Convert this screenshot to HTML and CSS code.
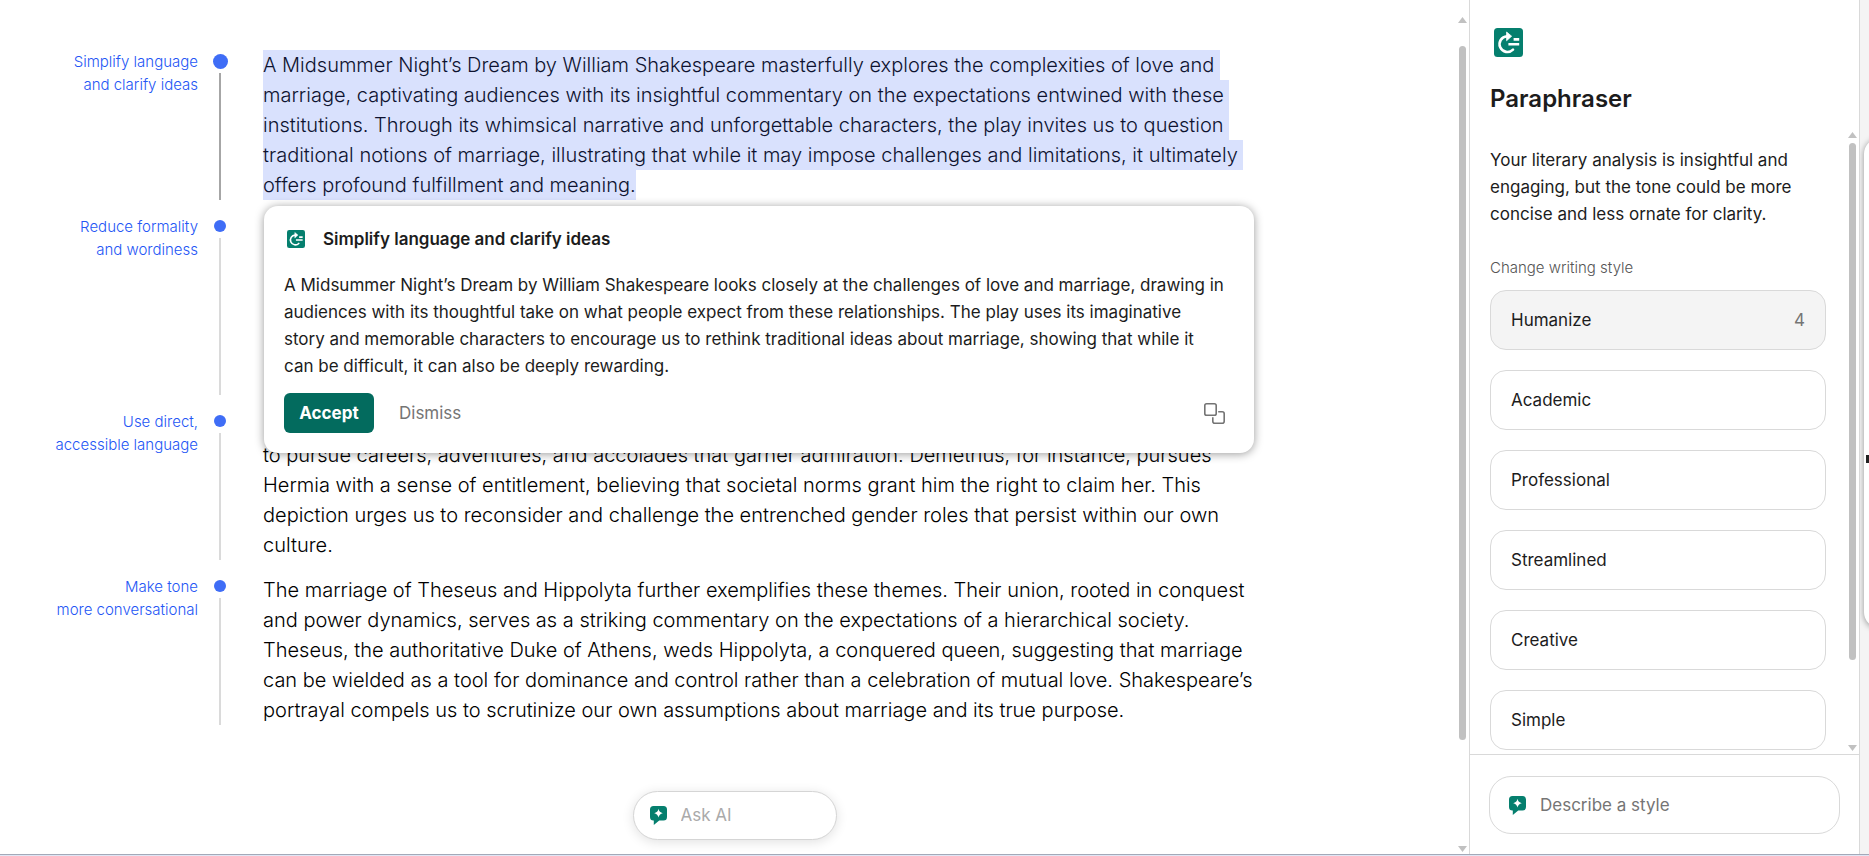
FILE: index.html
```
<!DOCTYPE html>
<html lang="en">
<head>
    <meta charset="UTF-8">
    <meta name="viewport" content="width=device-width, initial-scale=1.0">
    <title>Paraphraser</title>
    <link rel="stylesheet" href="styles.css">
</head>
<body>
    <!-- Shared icons -->
    <svg class="sprite" aria-hidden="true">
        <symbol id="icon-paraphrase" viewBox="0 0 29 29">
            <rect width="29" height="29" rx="3.5" fill="#057f6e"/>
            <g fill="none" stroke="#fff" stroke-width="2.6" stroke-linecap="round" stroke-linejoin="round">
                <path d="M14.500 8.200H13a7.900 7.900 0 1 0 6 13.500"/>
                <path d="M19.600 11.400h5.600M14.400 16.200h10.800" stroke-linecap="butt"/>
            </g>
            <path d="M12.600 4l5 4.200-5 4.500z" fill="#fff" stroke="#fff" stroke-width=".8" stroke-linejoin="round"/>
        </symbol>
        <symbol id="icon-spark" viewBox="0 0 17 19">
            <path d="M3.500 0h10A3.500 3.500 0 0 1 17 3.500v7.500a3.500 3.500 0 0 1-3.500 3.500H9.200L3.800 19v-4.500h-.3A3.500 3.500 0 0 1 0 11V3.500A3.500 3.500 0 0 1 3.500 0z" fill="#057f6e"/>
            <path d="M8.500 2.800q.7 3.600 4.300 4.400-3.600.8-4.300 4.400-.7-3.600-4.300-4.400 3.600-.8 4.300-4.400z" fill="#fff"/>
        </symbol>
    </svg>

    <div class="app">
        <main class="editor">
            <div class="document">
                <section class="row active">
                    <a class="label" href="#">Simplify language<br>and clarify ideas</a>
                    <div class="rail"></div>
                    <div class="text">
                        <p><mark>A Midsummer Night’s Dream by William Shakespeare masterfully explores the complexities of love and marriage, captivating audiences with its insightful commentary on the expectations entwined with these institutions. Through its whimsical narrative and unforgettable characters, the play invites us to question traditional notions of marriage, illustrating that while it may impose challenges and limitations, it ultimately offers profound fulfillment and meaning.</mark></p>

                        <div class="popover">
                            <h2><svg><use href="#icon-paraphrase"/></svg>Simplify language and clarify ideas</h2>
                            <p>
                                A Midsummer Night’s Dream by William Shakespeare looks closely at the challenges of love and marriage, drawing in<br>
                                audiences with its thoughtful take on what people expect from these relationships. The play uses its imaginative<br>
                                story and memorable characters to encourage us to rethink traditional ideas about marriage, showing that while it<br>
                                can be difficult, it can also be deeply rewarding.
                            </p>
                            <div class="actions">
                                <button class="accept">Accept</button>
                                <button class="dismiss">Dismiss</button>
                                <button class="compare" aria-label="Compare">
                                    <svg width="21" height="21" viewBox="0 0 21 21" fill="none" stroke="#747474" stroke-width="1.6">
                                        <rect x=".8" y=".8" width="11.400" height="11.400" rx="1.800"/>
                                        <path d="M14.200 8.800h4a2 2 0 0 1 2 2v7.400a2 2 0 0 1-2 2h-7.400a2 2 0 0 1-2-2v-4"/>
                                    </svg>
                                </button>
                            </div>
                        </div>
                    </div>
                </section>

                <section class="row tall">
                    <a class="label" href="#">Reduce formality<br>and wordiness</a>
                    <div class="rail"></div>
                    <div class="text"></div>
                </section>

                <section class="row">
                    <a class="label" href="#">Use direct,<br>accessible language</a>
                    <div class="rail"></div>
                    <div class="text">
                        <p>to pursue careers, adventures, and accolades that garner admiration. Demetrius, for instance, pursues Hermia with a sense of entitlement, believing that societal norms grant him the right to claim her. This depiction urges us to reconsider and challenge the entrenched gender roles that persist within our own culture.</p>
                    </div>
                </section>

                <section class="row">
                    <a class="label" href="#">Make tone<br>more conversational</a>
                    <div class="rail"></div>
                    <div class="text">
                        <p>The marriage of Theseus and Hippolyta further exemplifies these themes. Their union, rooted in conquest and power dynamics, serves as a striking commentary on the expectations of a hierarchical society. Theseus, the authoritative Duke of Athens, weds Hippolyta, a conquered queen, suggesting that marriage can be wielded as a tool for dominance and control rather than a celebration of mutual love. Shakespeare’s portrayal compels us to scrutinize our own assumptions about marriage and its true purpose.</p>
                    </div>
                </section>
            </div>

            <div class="scrollbar">
                <span class="up"></span>
                <span class="track"><span class="thumb"></span></span>
                <span class="down"></span>
            </div>

            <label class="ask">
                <svg width="17" height="19"><use href="#icon-spark"/></svg>
                <input type="text" placeholder="Ask AI" aria-label="Ask AI">
            </label>
        </main>

        <aside class="sidebar">
            <header>
                <svg width="29" height="29"><use href="#icon-paraphrase"/></svg>
                <h1>Paraphraser</h1>
            </header>
            <div class="panel">
                <div class="panel-content">
                    <p>Your literary analysis is insightful and engaging, but the tone could be more concise and less ornate for clarity.</p>
                    <h3>Change writing style</h3>
                    <div class="styles">
                        <button class="selected">Humanize <span>4</span></button>
                        <button>Academic</button>
                        <button>Professional</button>
                        <button>Streamlined</button>
                        <button>Creative</button>
                        <button>Simple</button>
                    </div>
                </div>
                <div class="scrollbar">
                    <span class="up"></span>
                    <span class="track"><span class="thumb"></span></span>
                    <span class="down"></span>
                </div>
            </div>
            <footer>
                <label class="describe">
                    <svg width="17" height="19"><use href="#icon-spark"/></svg>
                    <input type="text" placeholder="Describe a style" aria-label="Describe a style">
                </label>
            </footer>
        </aside>

        <div class="edge">
            <div class="drawer"></div>
        </div>
    </div>
</body>
</html>
```
FILE: styles.css
```
* {
    box-sizing: border-box;
}

body {
    margin: 0;
    font-family: Inter, "Liberation Sans", sans-serif;
    font-size: 17px;
    line-height: 27px;
    color: #1c1c1c;
    background-color: #fff;
}

h1, h2, h3, p {
    margin: 0;
}

button, input {
    font: inherit;
    color: inherit;
    padding: 0;
    border: 0;
    background: none;
}

button {
    cursor: pointer;
}

svg {
    flex: none;
}

.sprite {
    position: absolute;
    width: 0;
    height: 0;
}

.app {
    display: grid;
    grid-template-columns: 1fr 391px 9px;
    height: 100vh;
    border-bottom: 1px solid #dfe6f5;
    box-shadow: inset 0 -1px #a3a9b8;
    padding-bottom: 1px;
    overflow: hidden;
}

/* Document with the suggestion timeline */
.editor {
    position: relative;
    display: flex;
    min-height: 0;
}

.document {
    flex: 1;
    display: flex;
    flex-direction: column;
    gap: 15px;
    padding: 50px 200px 0 20px;
}

.row {
    display: grid;
    grid-template-columns: 178px 44px 1fr;
    min-height: 150px;
}

.row.tall {
    min-height: 180px;
}

.label {
    font-size: 15px;
    font-weight: 300;
    line-height: 23px;
    text-align: right;
    text-decoration: none;
    color: #2456f5;
}

.rail {
    display: flex;
    flex-direction: column;
    align-items: center;
    gap: 6px;
    padding-top: 5px;
}

.rail::before {
    content: "";
    width: 12px;
    height: 12px;
    border-radius: 50%;
    background-color: #3f6df6;
}

.rail::after {
    content: "";
    flex: 1;
    width: 2px;
    background-color: #dadada;
}

.active .rail {
    gap: 4px;
    padding-top: 4px;
}

.active .rail::before {
    width: 15px;
    height: 15px;
}

.active .rail::after {
    background-color: #a6a6a6;
}

.text {
    position: relative;
    align-self: end;
    margin-left: 21px;
    font-size: 20px;
    font-weight: 300;
    line-height: 30px;
    color: #000;
}

mark {
    padding: 3px 0;
    color: #0e1330;
    background-color: #d9e1fd;
    white-space: break-spaces;
}

/* Suggestion card */
.popover {
    position: absolute;
    z-index: 1;
    top: calc(100% + 6px);
    left: 1px;
    right: 2px;
    padding: 20px;
    border-radius: 14px;
    background-color: #fff;
    box-shadow: 0 1px 10px rgba(0, 0, 0, 0.4);
    font-size: 17px;
    font-weight: 400;
    line-height: 27px;
    color: #1c1c1c;
}

.popover h2 {
    display: flex;
    align-items: center;
    gap: 18px;
    height: 26px;
    padding-left: 3px;
    margin-bottom: 20px;
    font-size: 17px;
    font-weight: 600;
}

.popover h2 svg {
    width: 18px;
    height: 18px;
}

.actions {
    display: flex;
    align-items: center;
    gap: 25px;
    margin-top: 13px;
}

.accept {
    width: 90px;
    height: 40px;
    border-radius: 6px;
    font-weight: 700;
    color: #fff;
    background-color: #036b5e;
}

.dismiss {
    color: #757575;
}

.compare {
    display: flex;
    margin-left: auto;
    margin-right: 9px;
}

.ask {
    position: absolute;
    bottom: 14px;
    left: 50%;
    transform: translateX(-50%);
    display: flex;
    align-items: center;
    gap: 14px;
    width: 204px;
    height: 49px;
    padding: 0 16px;
    border: 1px solid #d5d5d5;
    border-radius: 25px;
    background-color: #fff;
    box-shadow: 0 2px 12px rgba(0, 0, 0, 0.12);
}

input {
    flex: 1;
    min-width: 0;
    outline: none;
}

.ask input::placeholder {
    color: #aaa;
}

/* Scrollbars */
.scrollbar {
    display: flex;
    flex-direction: column;
    align-items: center;
    width: 13px;
}

.editor > .scrollbar {
    padding: 17px 0 2px;
}

.track {
    flex: 1;
    width: 7px;
    padding: 5px 0 85px;
}

.editor > .scrollbar .track {
    padding: 23px 0 106px;
}

.thumb {
    display: block;
    height: 100%;
    border-radius: 4px;
    background-color: #c1c1c1;
}

.up, .down {
    width: 9px;
    height: 6px;
    background-color: #c1c1c1;
    clip-path: polygon(50% 0, 100% 100%, 0 100%);
}

.down {
    clip-path: polygon(0 0, 100% 0, 50% 100%);
}

/* Sidebar */
.sidebar {
    display: flex;
    flex-direction: column;
    min-height: 0;
    border: solid #d9d9d9;
    border-width: 0 1px;
}

.sidebar header {
    padding: 28px 24px 0;
    height: 131px;
}

.sidebar header svg {
    display: block;
}

h1 {
    margin: 27px 0 0 -4px;
    font-size: 24px;
    line-height: 30px;
    font-weight: 600;
}

.panel {
    flex: 1;
    display: flex;
    min-height: 0;
    overflow: hidden;
}

.panel-content {
    flex: 1;
    padding: 16px 20px 0 20px;
}

.panel > .scrollbar {
    padding: 1px 0 3px;
}

h3 {
    margin: 28px 0 10px;
    font-size: 15px;
    line-height: 24px;
    font-weight: 300;
    color: #555;
}

.styles {
    display: flex;
    flex-direction: column;
    gap: 20px;
}

.styles button {
    display: flex;
    justify-content: space-between;
    align-items: center;
    height: 60px;
    padding: 0 20px;
    border: 1px solid #d9d9d9;
    border-radius: 16px;
}

.styles .selected {
    background-color: #f4f4f4;
}

.styles span {
    color: #757575;
}

.sidebar footer {
    padding: 21px 19px 20px;
    border-top: 1px solid #d9d9d9;
}

.describe {
    display: flex;
    align-items: center;
    gap: 14px;
    height: 58px;
    padding: 0 19px;
    border: 1px solid #d9d9d9;
    border-radius: 22px;
}

.describe input::placeholder {
    color: #757575;
}

/* Collapsed drawer at the window edge */
.edge {
    display: flex;
    padding: 138px 0 226px 4px;
    background-color: #f4f4f4;
    overflow: hidden;
}

.drawer {
    display: flex;
    align-items: center;
    flex: none;
    width: 40px;
    border-radius: 16px;
    background-color: #fff;
    box-shadow: 0 1px 6px rgba(0, 0, 0, 0.4);
}

.drawer::before {
    content: "";
    width: 12px;
    height: 8px;
    margin: 152px 0 0 2px;
    background-color: #222;
}
```
